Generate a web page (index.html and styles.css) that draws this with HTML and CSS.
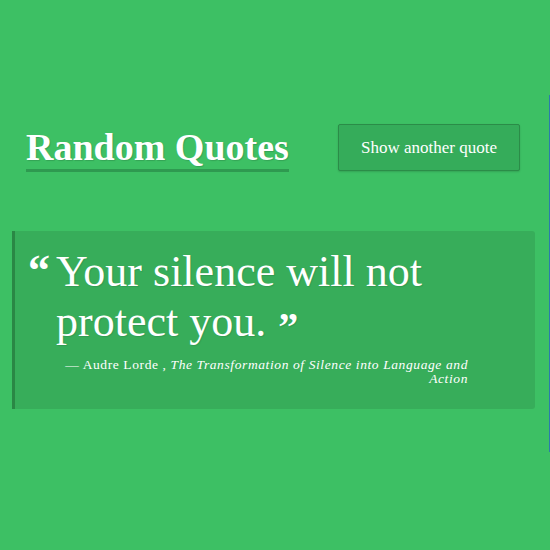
FILE: index.html
```html
<!DOCTYPE html>
<html>
<head>
<meta charset="utf-8">
<link rel="stylesheet" href="styles.css">
</head>
<body>
<div class="page">
  <header class="top">
    <h1 class="title">Random Quotes</h1>
    <button class="btn">Show another quote</button>
  </header>
  <blockquote class="card">
    <span class="open">&ldquo;</span>
    <div class="body">
      <p class="text">Your silence will not protect you.</p>
      <p class="cite">&mdash; Audre Lorde , <em>The Transformation of Silence into Language and Action</em></p>
    </div>
  </blockquote>
</div>
<div class="edge"></div>
</body>
</html>
```
FILE: styles.css
```css
html, body {
  margin: 0;
  padding: 0;
  background: #3dc064;
  height: 100%;
}
body {
  font-family: "Liberation Serif", "DejaVu Serif", serif;
  color: #ffffff;
  position: relative;
  overflow: hidden;
}
.page {
  padding-top: 124px;
}
.top {
  display: flex;
  align-items: flex-start;
  padding: 0 30px 0 26px;
  justify-content: space-between;
}
.title {
  margin: 0;
  font-size: 38px;
  font-weight: bold;
  line-height: 43px;
  padding-top: 2px;
  border-bottom: 3px solid #2e9a50;
  text-shadow: 1px 1px 1px rgba(0,0,0,0.15);
}
.btn {
  font-family: "Liberation Serif", "DejaVu Serif", serif;
  font-size: 17px;
  color: #ffffff;
  background: #35ac5a;
  border: 1px solid #2b8c48;
  border-radius: 2px;
  width: 182px;
  height: 47px;
  padding: 0;
  box-shadow: 0 1px 2px rgba(0,0,0,0.15);
}
.card {
  margin: 59px 15px 0 12px;
  background: #37ad5a;
  border-left: 3px solid #2a8745;
  border-radius: 0 3px 3px 0;
  display: flex;
  padding: 16px 0 23px 13px;
}
.open {
  font-size: 44px;
  font-weight: bold;
  line-height: 44px;
  padding-top: 2px;
  width: 28px;
  flex: none;
}
.body {
  width: 412px;
}
.text {
  margin: 0;
  font-size: 44px;
  line-height: 50px;
  text-shadow: 1px 1px 1px rgba(0,0,0,0.1);
}
.text::after {
  content: "\201D";
  font-weight: bold;
  font-size: 40px;
  margin-left: 12px;
  vertical-align: -4px;
  line-height: 0;
}
.cite {
  margin: 11px 0 0;
  font-size: 13.5px;
  line-height: 14px;
  text-align: right;
  letter-spacing: 0.6px;
}
.cite em {
  font-style: italic;
}
.edge {
  position: absolute;
  right: 0;
  top: 95px;
  width: 1px;
  height: 357px;
  background: #2b7bab;
}
```
